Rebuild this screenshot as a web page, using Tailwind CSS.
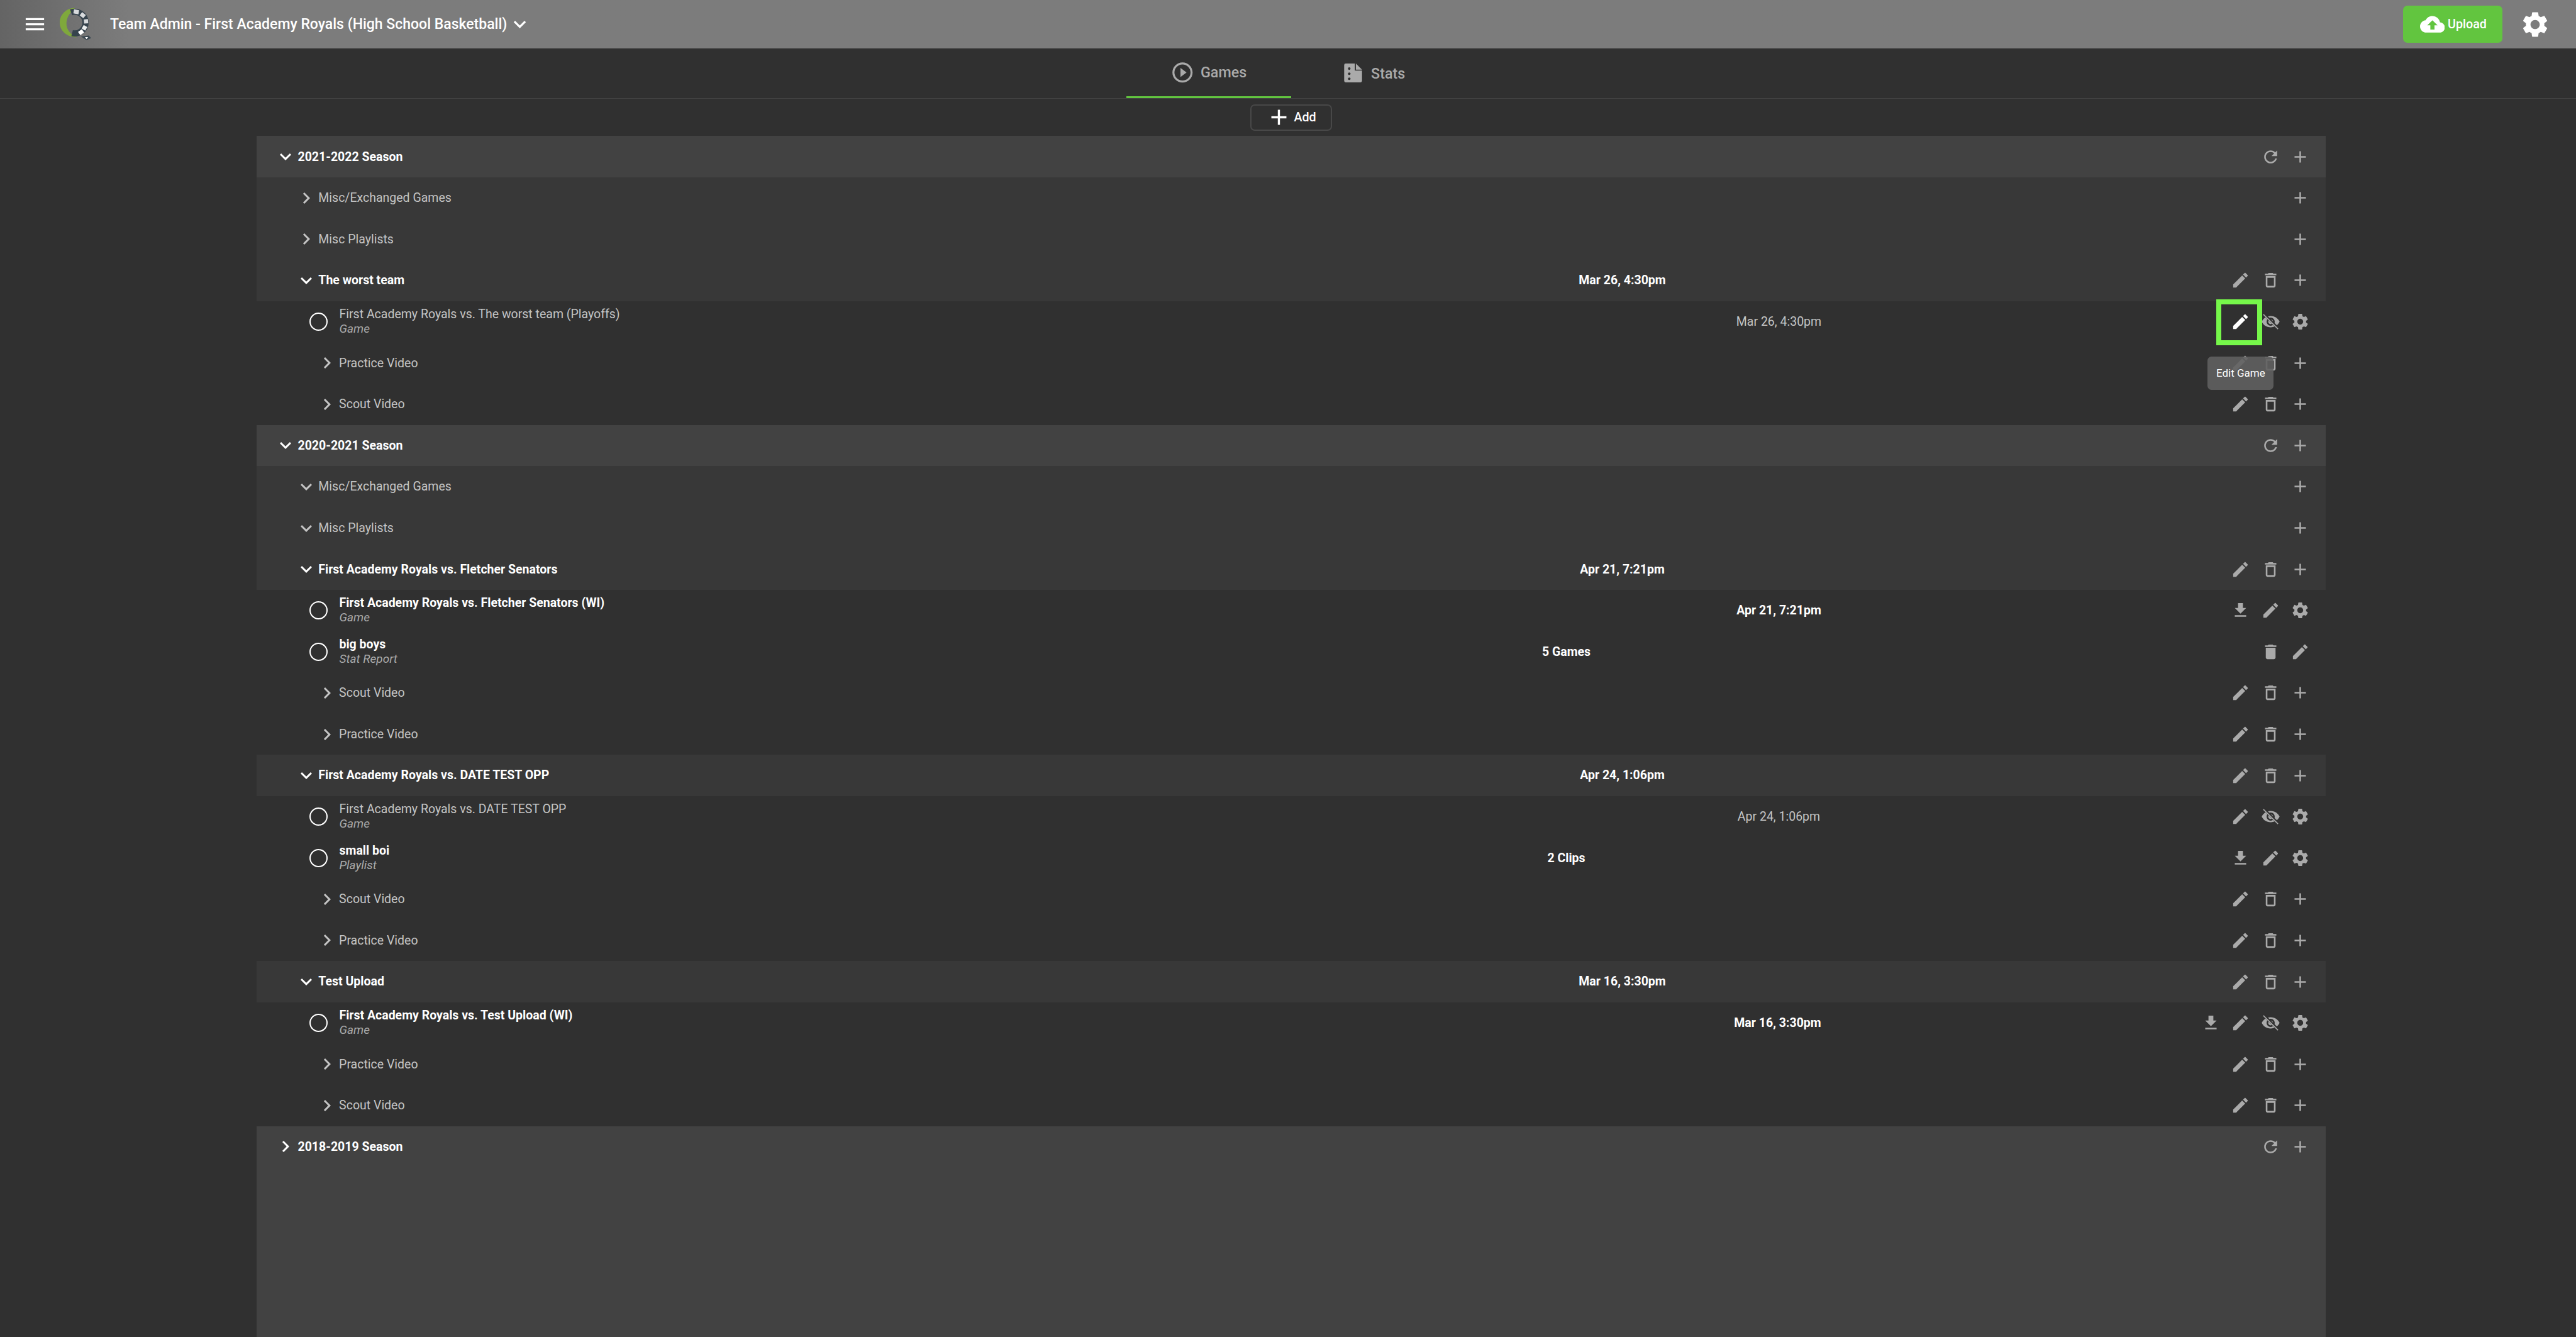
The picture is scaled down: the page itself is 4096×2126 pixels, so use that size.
<!DOCTYPE html>
<html>
<head>
<meta charset="utf-8">
<script src="https://cdn.jsdelivr.net/npm/@tailwindcss/browser@4"></script>
</head>
<body class="bg-[#303030] font-['Roboto',sans-serif] text-[19.5px] overflow-hidden">
<svg class="absolute w-0 h-0">
<symbol id="edit" viewBox="0 0 24 24"><path d="M3 17.25V21h3.75L17.81 9.94l-3.75-3.75L3 17.25zM20.71 7.04c.39-.39.39-1.02 0-1.41l-2.34-2.34c-.39-.39-1.02-.39-1.41 0l-1.83 1.83 3.75 3.75 1.83-1.83z"/></symbol>
<symbol id="trash" viewBox="0 0 24 24"><path d="M6 19c0 1.1.9 2 2 2h8c1.1 0 2-.9 2-2V7H6v12zM8 9h8v10H8V9zm7.5-5l-1-1h-5l-1 1H5v2h14V4z"/></symbol>
<symbol id="trashf" viewBox="0 0 24 24"><path d="M6 19c0 1.1.9 2 2 2h8c1.1 0 2-.9 2-2V7H6v12zM19 4h-3.5l-1-1h-5l-1 1H5v2h14V4z"/></symbol>
<symbol id="add" viewBox="0 0 24 24"><path d="M19 13h-6v6h-2v-6H5v-2h6V5h2v6h6v2z"/></symbol>
<symbol id="gear" viewBox="0 0 24 24"><path d="M19.14 12.94c.04-.3.06-.61.06-.94 0-.32-.02-.64-.07-.94l2.03-1.58c.18-.14.23-.41.12-.61l-1.92-3.32c-.12-.22-.37-.29-.59-.22l-2.39.96c-.5-.38-1.03-.7-1.62-.94l-.36-2.54c-.04-.24-.24-.41-.48-.41h-3.84c-.24 0-.43.17-.47.41l-.36 2.54c-.59.24-1.13.57-1.62.94l-2.39-.96c-.22-.08-.47 0-.59.22L2.74 8.87c-.12.21-.08.47.12.61l2.03 1.58c-.05.3-.09.63-.09.94s.02.64.07.94l-2.03 1.58c-.18.14-.23.41-.12.61l1.92 3.32c.12.22.37.29.59.22l2.39-.96c.5.38 1.03.7 1.62.94l.36 2.54c.05.24.24.41.48.41h3.84c.24 0 .44-.17.47-.41l.36-2.54c.59-.24 1.13-.56 1.62-.94l2.39.96c.22.08.47 0 .59-.22l1.92-3.32c.12-.22.07-.47-.12-.61l-2.01-1.58zM12 15.6c-1.98 0-3.6-1.62-3.6-3.6s1.62-3.6 3.6-3.6 3.6 1.62 3.6 3.6-1.62 3.6-3.6 3.6z"/></symbol>
<symbol id="eye" viewBox="0 0 24 24"><path d="M12 5C7 5 2.73 8 1 12c1.73 4 6 7 11 7s9.27-3 11-7c-1.73-4-6-7-11-7zM12 17c-2.76 0-5-2.24-5-5s2.24-5 5-5 5 2.24 5 5-2.24 5-5 5zm0-8c-1.66 0-3 1.34-3 3s1.34 3 3 3 3-1.34 3-3-1.34-3-3-3z"/><path d="M3.6 2.6L21.4 20.4" stroke="#303030" stroke-width="3.2"/><path d="M3 3L21 21" stroke="#aaaaaa" stroke-width="1.3"/></symbol>
<symbol id="dl" viewBox="0 0 24 24"><path d="M19 9h-4V3H9v6H5l7 7 7-7zM5 18v2h14v-2H5z"/></symbol>
<symbol id="refresh" viewBox="0 0 24 24"><path d="M17.65 6.35C16.2 4.9 14.21 4 12 4c-4.42 0-7.99 3.58-7.99 8s3.57 8 7.99 8c3.73 0 6.84-2.55 7.73-6h-2.08c-.82 2.33-3.04 4-5.65 4-3.31 0-6-2.69-6-6s2.69-6 6-6c1.66 0 3.14.69 4.22 1.78L13 11h7V4l-2.35 2.35z"/></symbol>
<symbol id="down" viewBox="0 0 24 24"><path d="M7.41 8.59L12 13.17l4.59-4.58L18 10l-6 6-6-6 1.41-1.41z"/></symbol>
<symbol id="right" viewBox="0 0 24 24"><path d="M8.59 16.59L13.17 12 8.59 7.41 10 6l6 6-6 6-1.41-1.41z"/></symbol>
</svg>

<div class="flex flex-col h-[2126px] w-[4096px]">
  <header class="h-[77px] shrink-0 flex items-center bg-gradient-to-r from-[#646464] via-[#7c7c7c] via-[5%] to-[#7c7c7c] text-white pl-[36px] pr-[45px]">
    <svg class="w-[39px] h-[39px] fill-current" viewBox="0 0 24 24"><path d="M3 18h18v-2H3v2zm0-5h18v-2H3v2zm0-7v2h18V6H3z"/></svg>
    <svg class="w-[50px] h-[52px] ml-[20px] mt-[-1px]" viewBox="0 0 61 63">
      <path d="M30 .5C12 1 0 14 0 29c0 16 14 28 33 28.5C20 52 13 42 13 31 13 20 19 10 30 .5z" fill="#7fa83c"/>
      <path d="M22 9.2A21 21 0 1 1 24 49.4" fill="none" stroke="#36434d" stroke-width="12"/>
      <g fill="#d8dadc">
        <rect x="27" y="4" width="10" height="8" transform="rotate(10 32 8)"/>
        <rect x="40" y="11" width="9" height="8" transform="rotate(38 45 15)"/>
        <rect x="46.500" y="23" width="8" height="8" transform="rotate(85 51 27)"/>
        <rect x="44" y="35" width="8" height="8" transform="rotate(120 48 39)" fill="#eceeee"/>
        <rect x="36" y="44" width="9" height="8" transform="rotate(145 41 48)" fill="#ffffff"/>
      </g>
      <polygon points="41,56 56,54 61,59 52,63" fill="#3c4952"/>
      <polygon points="49,57 55,57 52,61" fill="#ffffff"/>
    </svg>
    <span class="ml-[30px] text-[23px] font-medium leading-none">Team Admin - First Academy Royals (High School Basketball)</span>
    <svg class="w-[39px] h-[39px] fill-current ml-[1px]" viewBox="0 0 24 24"><use href="#down"/></svg>
    <div class="ml-auto flex items-center gap-[32px]">
      <div class="w-[158.3px] h-[59px] bg-[#62c53f] rounded-[7px] flex items-center pl-[27px] gap-[5px] text-[19.7px] font-medium">
        <svg class="w-[39.4px] h-[39.4px] fill-current" viewBox="0 0 24 24"><path d="M19.35 10.04C18.67 6.59 15.64 4 12 4 9.11 4 6.6 5.64 5.35 8.04 2.34 8.36 0 10.91 0 14c0 3.31 2.69 6 6 6h13c2.76 0 5-2.24 5-5 0-2.64-2.05-4.78-4.65-4.96zM14 13v4h-4v-4H7l5-5 5 5h-3z"/></svg>
        <span>Upload</span>
      </div>
      <svg class="w-[40px] h-[40px] fill-current" viewBox="2.2 2.2 19.6 19.6"><use href="#gear" x="0" y="0" width="24" height="24"/></svg>
    </div>
  </header>

  <nav class="h-[80.4px] shrink-0 border-b-[1.6px] border-[#444444] flex justify-center pl-[10px] text-[#aaaaaa] text-[23.3px] font-medium">
    <div class="w-[262.4px] h-[78.8px] border-b-[3.3px] border-[#62c53f] flex items-center justify-center gap-[9px]">
      <svg class="w-[38.5px] h-[38.5px] fill-current" viewBox="0 0 24 24"><path d="M10 16.5l6-4.500-6-4.500v9zM12 2C6.480 2 2 6.480 2 12s4.480 10 10 10 10-4.480 10-10S17.520 2 12 2zm0 18c-4.410 0-8-3.590-8-8s3.590-8 8-8 8 3.590 8 8-3.590 8-8 8z"/></svg>
      <span class="pt-[2px]">Games</span>
    </div>
    <div class="w-[262.4px] h-[78.8px] flex items-center justify-center gap-[14px] pl-[3px]">
      <svg class="w-[29px] h-[30px]" viewBox="0 0 35 37"><path fill="#aaaaaa" d="M3 0H21V14H35V34a3 3 0 0 1-3 3H3a3 3 0 0 1-3-3V3a3 3 0 0 1 3-3zM23 0L35 12H23z"/><g fill="#303030"><circle cx="10" cy="10" r="2.500"/><circle cx="10" cy="20" r="2.500"/><circle cx="10" cy="30" r="2.500"/></g></svg>
      <span class="pt-[2px]">Stats</span>
    </div>
  </nav>

  <div class="h-[59px] shrink-0 flex justify-center pl-[10px] pt-[8.2px]">
    <div class="w-[130px] h-[42px] border-[2px] border-[#484848] rounded-[7px] flex items-center justify-center gap-[3px] text-white text-[19.7px] font-medium">
      <svg class="w-[41px] h-[41px] fill-current" viewBox="0 0 24 24"><use href="#add"/></svg>
      <span>Add</span>
    </div>
  </div>

  <main class="relative flex-1 ml-[407.5px] mr-[398px] bg-[#424242]">

    <div class="h-[65.6px] flex items-center bg-[#424242]">
      <div class="w-[1972px] flex items-center pl-[28.7px] text-white font-bold"><svg class="w-[36px] h-[36px] fill-current mr-[1.3px]"><use href="#down"/></svg>2021-2022 Season</div>
      <div class="ml-auto flex items-center pr-[16.4px] text-[#aaaaaa]">
        <span class="w-[47.56px] flex justify-center"><svg class="w-[31px] h-[31px] fill-current"><use href="#refresh"/></svg></span>
        <span class="w-[47.56px] flex justify-center"><svg class="w-[31px] h-[31px] fill-current"><use href="#add"/></svg></span>
      </div>
    </div>

    <div class="h-[65.6px] flex items-center bg-[#383838]">
      <div class="w-[1972px] flex items-center pl-[61.5px] text-[#c4c4c4]"><svg class="w-[36px] h-[36px] fill-current mr-[1.3px]"><use href="#right"/></svg>Misc/Exchanged Games</div>
      <div class="ml-auto flex items-center pr-[16.4px] text-[#aaaaaa]">
        <span class="w-[47.56px] flex justify-center"><svg class="w-[31px] h-[31px] fill-current"><use href="#add"/></svg></span>
      </div>
    </div>

    <div class="h-[65.6px] flex items-center bg-[#383838]">
      <div class="w-[1972px] flex items-center pl-[61.5px] text-[#c4c4c4]"><svg class="w-[36px] h-[36px] fill-current mr-[1.3px]"><use href="#right"/></svg>Misc Playlists</div>
      <div class="ml-auto flex items-center pr-[16.4px] text-[#aaaaaa]">
        <span class="w-[47.56px] flex justify-center"><svg class="w-[31px] h-[31px] fill-current"><use href="#add"/></svg></span>
      </div>
    </div>

    <div class="h-[65.6px] flex items-center bg-[#383838]">
      <div class="w-[1972px] flex items-center pl-[61.5px] text-white font-bold"><svg class="w-[36px] h-[36px] fill-current mr-[1.3px]"><use href="#down"/></svg>The worst team</div>
      <div class="w-[400px] text-center text-white font-bold">Mar 26, 4:30pm</div>
      <div class="ml-auto flex items-center pr-[16.4px] text-[#aaaaaa]">
        <span class="w-[47.56px] flex justify-center"><svg class="w-[31px] h-[31px] fill-current"><use href="#edit"/></svg></span>
        <span class="w-[47.56px] flex justify-center"><svg class="w-[31px] h-[31px] fill-current"><use href="#trash"/></svg></span>
        <span class="w-[47.56px] flex justify-center"><svg class="w-[31px] h-[31px] fill-current"><use href="#add"/></svg></span>
      </div>
    </div>

    <div class="h-[65.6px] flex items-center bg-[#303030]">
      <div class="w-[2221px] flex items-center pl-[84.6px]">
        <span class="w-[28.7px] h-[28.7px] rounded-full border-[2.5px] border-white shrink-0"></span>
        <div class="ml-[18.7px] flex flex-col"><span class="leading-[22.5px] text-[#c4c4c4]">First Academy Royals vs. The worst team (Playoffs)</span><span class="italic text-[19px] leading-[22px] text-[#aaaaaa]">Game</span></div>
      </div>
      <div class="w-[400px] text-center text-[#c4c4c4]">Mar 26, 4:30pm</div>
      <div class="ml-auto flex items-center pr-[16.4px] text-[#aaaaaa]">
        <span class="w-[47.56px] flex justify-center text-white"><svg class="w-[31px] h-[31px] fill-current"><use href="#edit"/></svg></span>
        <span class="w-[47.56px] flex justify-center"><svg class="w-[31px] h-[31px] fill-current"><use href="#eye"/></svg></span>
        <span class="w-[47.56px] flex justify-center"><svg class="w-[31px] h-[31px] fill-current"><use href="#gear"/></svg></span>
      </div>
    </div>

    <div class="h-[65.6px] flex items-center bg-[#303030]">
      <div class="w-[1972px] flex items-center pl-[94.3px] text-[#c4c4c4]"><svg class="w-[36px] h-[36px] fill-current mr-[1.3px]"><use href="#right"/></svg>Practice Video</div>
      <div class="ml-auto flex items-center pr-[16.4px] text-[#aaaaaa]">
        <span class="w-[47.56px] flex justify-center"><svg class="w-[31px] h-[31px] fill-current"><use href="#edit"/></svg></span>
        <span class="w-[47.56px] flex justify-center"><svg class="w-[31px] h-[31px] fill-current"><use href="#trash"/></svg></span>
        <span class="w-[47.56px] flex justify-center"><svg class="w-[31px] h-[31px] fill-current"><use href="#add"/></svg></span>
      </div>
    </div>

    <div class="h-[65.6px] flex items-center bg-[#303030]">
      <div class="w-[1972px] flex items-center pl-[94.3px] text-[#c4c4c4]"><svg class="w-[36px] h-[36px] fill-current mr-[1.3px]"><use href="#right"/></svg>Scout Video</div>
      <div class="ml-auto flex items-center pr-[16.4px] text-[#aaaaaa]">
        <span class="w-[47.56px] flex justify-center"><svg class="w-[31px] h-[31px] fill-current"><use href="#edit"/></svg></span>
        <span class="w-[47.56px] flex justify-center"><svg class="w-[31px] h-[31px] fill-current"><use href="#trash"/></svg></span>
        <span class="w-[47.56px] flex justify-center"><svg class="w-[31px] h-[31px] fill-current"><use href="#add"/></svg></span>
      </div>
    </div>

    <div class="h-[65.6px] flex items-center bg-[#424242]">
      <div class="w-[1972px] flex items-center pl-[28.7px] text-white font-bold"><svg class="w-[36px] h-[36px] fill-current mr-[1.3px]"><use href="#down"/></svg>2020-2021 Season</div>
      <div class="ml-auto flex items-center pr-[16.4px] text-[#aaaaaa]">
        <span class="w-[47.56px] flex justify-center"><svg class="w-[31px] h-[31px] fill-current"><use href="#refresh"/></svg></span>
        <span class="w-[47.56px] flex justify-center"><svg class="w-[31px] h-[31px] fill-current"><use href="#add"/></svg></span>
      </div>
    </div>

    <div class="h-[65.6px] flex items-center bg-[#383838]">
      <div class="w-[1972px] flex items-center pl-[61.5px] text-[#c4c4c4]"><svg class="w-[36px] h-[36px] fill-current mr-[1.3px]"><use href="#down"/></svg>Misc/Exchanged Games</div>
      <div class="ml-auto flex items-center pr-[16.4px] text-[#aaaaaa]">
        <span class="w-[47.56px] flex justify-center"><svg class="w-[31px] h-[31px] fill-current"><use href="#add"/></svg></span>
      </div>
    </div>

    <div class="h-[65.6px] flex items-center bg-[#383838]">
      <div class="w-[1972px] flex items-center pl-[61.5px] text-[#c4c4c4]"><svg class="w-[36px] h-[36px] fill-current mr-[1.3px]"><use href="#down"/></svg>Misc Playlists</div>
      <div class="ml-auto flex items-center pr-[16.4px] text-[#aaaaaa]">
        <span class="w-[47.56px] flex justify-center"><svg class="w-[31px] h-[31px] fill-current"><use href="#add"/></svg></span>
      </div>
    </div>

    <div class="h-[65.6px] flex items-center bg-[#383838]">
      <div class="w-[1972px] flex items-center pl-[61.5px] text-white font-bold"><svg class="w-[36px] h-[36px] fill-current mr-[1.3px]"><use href="#down"/></svg>First Academy Royals vs. Fletcher Senators</div>
      <div class="w-[400px] text-center text-white font-bold">Apr 21, 7:21pm</div>
      <div class="ml-auto flex items-center pr-[16.4px] text-[#aaaaaa]">
        <span class="w-[47.56px] flex justify-center"><svg class="w-[31px] h-[31px] fill-current"><use href="#edit"/></svg></span>
        <span class="w-[47.56px] flex justify-center"><svg class="w-[31px] h-[31px] fill-current"><use href="#trash"/></svg></span>
        <span class="w-[47.56px] flex justify-center"><svg class="w-[31px] h-[31px] fill-current"><use href="#add"/></svg></span>
      </div>
    </div>

    <div class="h-[65.6px] flex items-center bg-[#303030]">
      <div class="w-[2221px] flex items-center pl-[84.6px]">
        <span class="w-[28.7px] h-[28.7px] rounded-full border-[2.5px] border-white shrink-0"></span>
        <div class="ml-[18.7px] flex flex-col"><span class="leading-[22.5px] text-white font-bold">First Academy Royals vs. Fletcher Senators (WI)</span><span class="italic text-[19px] leading-[22px] text-[#aaaaaa]">Game</span></div>
      </div>
      <div class="w-[400px] text-center text-white font-bold">Apr 21, 7:21pm</div>
      <div class="ml-auto flex items-center pr-[16.4px] text-[#aaaaaa]">
        <span class="w-[47.56px] flex justify-center"><svg class="w-[31px] h-[31px] fill-current"><use href="#dl"/></svg></span>
        <span class="w-[47.56px] flex justify-center"><svg class="w-[31px] h-[31px] fill-current"><use href="#edit"/></svg></span>
        <span class="w-[47.56px] flex justify-center"><svg class="w-[31px] h-[31px] fill-current"><use href="#gear"/></svg></span>
      </div>
    </div>

    <div class="h-[65.6px] flex items-center bg-[#303030]">
      <div class="w-[1883px] flex items-center pl-[84.6px]">
        <span class="w-[28.7px] h-[28.7px] rounded-full border-[2.5px] border-white shrink-0"></span>
        <div class="ml-[18.7px] flex flex-col"><span class="leading-[22.5px] text-white font-bold">big boys</span><span class="italic text-[19px] leading-[22px] text-[#aaaaaa]">Stat Report</span></div>
      </div>
      <div class="w-[400px] text-center text-white font-bold">5 Games</div>
      <div class="ml-auto flex items-center pr-[16.4px] text-[#aaaaaa]">
        <span class="w-[47.56px] flex justify-center"><svg class="w-[31px] h-[31px] fill-current"><use href="#trashf"/></svg></span>
        <span class="w-[47.56px] flex justify-center"><svg class="w-[31px] h-[31px] fill-current"><use href="#edit"/></svg></span>
      </div>
    </div>

    <div class="h-[65.6px] flex items-center bg-[#303030]">
      <div class="w-[1972px] flex items-center pl-[94.3px] text-[#c4c4c4]"><svg class="w-[36px] h-[36px] fill-current mr-[1.3px]"><use href="#right"/></svg>Scout Video</div>
      <div class="ml-auto flex items-center pr-[16.4px] text-[#aaaaaa]">
        <span class="w-[47.56px] flex justify-center"><svg class="w-[31px] h-[31px] fill-current"><use href="#edit"/></svg></span>
        <span class="w-[47.56px] flex justify-center"><svg class="w-[31px] h-[31px] fill-current"><use href="#trash"/></svg></span>
        <span class="w-[47.56px] flex justify-center"><svg class="w-[31px] h-[31px] fill-current"><use href="#add"/></svg></span>
      </div>
    </div>

    <div class="h-[65.6px] flex items-center bg-[#303030]">
      <div class="w-[1972px] flex items-center pl-[94.3px] text-[#c4c4c4]"><svg class="w-[36px] h-[36px] fill-current mr-[1.3px]"><use href="#right"/></svg>Practice Video</div>
      <div class="ml-auto flex items-center pr-[16.4px] text-[#aaaaaa]">
        <span class="w-[47.56px] flex justify-center"><svg class="w-[31px] h-[31px] fill-current"><use href="#edit"/></svg></span>
        <span class="w-[47.56px] flex justify-center"><svg class="w-[31px] h-[31px] fill-current"><use href="#trash"/></svg></span>
        <span class="w-[47.56px] flex justify-center"><svg class="w-[31px] h-[31px] fill-current"><use href="#add"/></svg></span>
      </div>
    </div>

    <div class="h-[65.6px] flex items-center bg-[#383838]">
      <div class="w-[1972px] flex items-center pl-[61.5px] text-white font-bold"><svg class="w-[36px] h-[36px] fill-current mr-[1.3px]"><use href="#down"/></svg>First Academy Royals vs. DATE TEST OPP</div>
      <div class="w-[400px] text-center text-white font-bold">Apr 24, 1:06pm</div>
      <div class="ml-auto flex items-center pr-[16.4px] text-[#aaaaaa]">
        <span class="w-[47.56px] flex justify-center"><svg class="w-[31px] h-[31px] fill-current"><use href="#edit"/></svg></span>
        <span class="w-[47.56px] flex justify-center"><svg class="w-[31px] h-[31px] fill-current"><use href="#trash"/></svg></span>
        <span class="w-[47.56px] flex justify-center"><svg class="w-[31px] h-[31px] fill-current"><use href="#add"/></svg></span>
      </div>
    </div>

    <div class="h-[65.6px] flex items-center bg-[#303030]">
      <div class="w-[2221px] flex items-center pl-[84.6px]">
        <span class="w-[28.7px] h-[28.7px] rounded-full border-[2.5px] border-white shrink-0"></span>
        <div class="ml-[18.7px] flex flex-col"><span class="leading-[22.5px] text-[#c4c4c4]">First Academy Royals vs. DATE TEST OPP</span><span class="italic text-[19px] leading-[22px] text-[#aaaaaa]">Game</span></div>
      </div>
      <div class="w-[400px] text-center text-[#c4c4c4]">Apr 24, 1:06pm</div>
      <div class="ml-auto flex items-center pr-[16.4px] text-[#aaaaaa]">
        <span class="w-[47.56px] flex justify-center"><svg class="w-[31px] h-[31px] fill-current"><use href="#edit"/></svg></span>
        <span class="w-[47.56px] flex justify-center"><svg class="w-[31px] h-[31px] fill-current"><use href="#eye"/></svg></span>
        <span class="w-[47.56px] flex justify-center"><svg class="w-[31px] h-[31px] fill-current"><use href="#gear"/></svg></span>
      </div>
    </div>

    <div class="h-[65.6px] flex items-center bg-[#303030]">
      <div class="w-[1883px] flex items-center pl-[84.6px]">
        <span class="w-[28.7px] h-[28.7px] rounded-full border-[2.5px] border-white shrink-0"></span>
        <div class="ml-[18.7px] flex flex-col"><span class="leading-[22.5px] text-white font-bold">small boi</span><span class="italic text-[19px] leading-[22px] text-[#aaaaaa]">Playlist</span></div>
      </div>
      <div class="w-[400px] text-center text-white font-bold">2 Clips</div>
      <div class="ml-auto flex items-center pr-[16.4px] text-[#aaaaaa]">
        <span class="w-[47.56px] flex justify-center"><svg class="w-[31px] h-[31px] fill-current"><use href="#dl"/></svg></span>
        <span class="w-[47.56px] flex justify-center"><svg class="w-[31px] h-[31px] fill-current"><use href="#edit"/></svg></span>
        <span class="w-[47.56px] flex justify-center"><svg class="w-[31px] h-[31px] fill-current"><use href="#gear"/></svg></span>
      </div>
    </div>

    <div class="h-[65.6px] flex items-center bg-[#303030]">
      <div class="w-[1972px] flex items-center pl-[94.3px] text-[#c4c4c4]"><svg class="w-[36px] h-[36px] fill-current mr-[1.3px]"><use href="#right"/></svg>Scout Video</div>
      <div class="ml-auto flex items-center pr-[16.4px] text-[#aaaaaa]">
        <span class="w-[47.56px] flex justify-center"><svg class="w-[31px] h-[31px] fill-current"><use href="#edit"/></svg></span>
        <span class="w-[47.56px] flex justify-center"><svg class="w-[31px] h-[31px] fill-current"><use href="#trash"/></svg></span>
        <span class="w-[47.56px] flex justify-center"><svg class="w-[31px] h-[31px] fill-current"><use href="#add"/></svg></span>
      </div>
    </div>

    <div class="h-[65.6px] flex items-center bg-[#303030]">
      <div class="w-[1972px] flex items-center pl-[94.3px] text-[#c4c4c4]"><svg class="w-[36px] h-[36px] fill-current mr-[1.3px]"><use href="#right"/></svg>Practice Video</div>
      <div class="ml-auto flex items-center pr-[16.4px] text-[#aaaaaa]">
        <span class="w-[47.56px] flex justify-center"><svg class="w-[31px] h-[31px] fill-current"><use href="#edit"/></svg></span>
        <span class="w-[47.56px] flex justify-center"><svg class="w-[31px] h-[31px] fill-current"><use href="#trash"/></svg></span>
        <span class="w-[47.56px] flex justify-center"><svg class="w-[31px] h-[31px] fill-current"><use href="#add"/></svg></span>
      </div>
    </div>

    <div class="h-[65.6px] flex items-center bg-[#383838]">
      <div class="w-[1972px] flex items-center pl-[61.5px] text-white font-bold"><svg class="w-[36px] h-[36px] fill-current mr-[1.3px]"><use href="#down"/></svg>Test Upload</div>
      <div class="w-[400px] text-center text-white font-bold">Mar 16, 3:30pm</div>
      <div class="ml-auto flex items-center pr-[16.4px] text-[#aaaaaa]">
        <span class="w-[47.56px] flex justify-center"><svg class="w-[31px] h-[31px] fill-current"><use href="#edit"/></svg></span>
        <span class="w-[47.56px] flex justify-center"><svg class="w-[31px] h-[31px] fill-current"><use href="#trash"/></svg></span>
        <span class="w-[47.56px] flex justify-center"><svg class="w-[31px] h-[31px] fill-current"><use href="#add"/></svg></span>
      </div>
    </div>

    <div class="h-[65.6px] flex items-center bg-[#303030]">
      <div class="w-[2219px] flex items-center pl-[84.6px]">
        <span class="w-[28.7px] h-[28.7px] rounded-full border-[2.5px] border-white shrink-0"></span>
        <div class="ml-[18.7px] flex flex-col"><span class="leading-[22.5px] text-white font-bold">First Academy Royals vs. Test Upload (WI)</span><span class="italic text-[19px] leading-[22px] text-[#aaaaaa]">Game</span></div>
      </div>
      <div class="w-[400px] text-center text-white font-bold">Mar 16, 3:30pm</div>
      <div class="ml-auto flex items-center pr-[16.4px] text-[#aaaaaa]">
        <span class="w-[47.56px] flex justify-center"><svg class="w-[31px] h-[31px] fill-current"><use href="#dl"/></svg></span>
        <span class="w-[47.56px] flex justify-center"><svg class="w-[31px] h-[31px] fill-current"><use href="#edit"/></svg></span>
        <span class="w-[47.56px] flex justify-center"><svg class="w-[31px] h-[31px] fill-current"><use href="#eye"/></svg></span>
        <span class="w-[47.56px] flex justify-center"><svg class="w-[31px] h-[31px] fill-current"><use href="#gear"/></svg></span>
      </div>
    </div>

    <div class="h-[65.6px] flex items-center bg-[#303030]">
      <div class="w-[1972px] flex items-center pl-[94.3px] text-[#c4c4c4]"><svg class="w-[36px] h-[36px] fill-current mr-[1.3px]"><use href="#right"/></svg>Practice Video</div>
      <div class="ml-auto flex items-center pr-[16.4px] text-[#aaaaaa]">
        <span class="w-[47.56px] flex justify-center"><svg class="w-[31px] h-[31px] fill-current"><use href="#edit"/></svg></span>
        <span class="w-[47.56px] flex justify-center"><svg class="w-[31px] h-[31px] fill-current"><use href="#trash"/></svg></span>
        <span class="w-[47.56px] flex justify-center"><svg class="w-[31px] h-[31px] fill-current"><use href="#add"/></svg></span>
      </div>
    </div>

    <div class="h-[65.6px] flex items-center bg-[#303030]">
      <div class="w-[1972px] flex items-center pl-[94.3px] text-[#c4c4c4]"><svg class="w-[36px] h-[36px] fill-current mr-[1.3px]"><use href="#right"/></svg>Scout Video</div>
      <div class="ml-auto flex items-center pr-[16.4px] text-[#aaaaaa]">
        <span class="w-[47.56px] flex justify-center"><svg class="w-[31px] h-[31px] fill-current"><use href="#edit"/></svg></span>
        <span class="w-[47.56px] flex justify-center"><svg class="w-[31px] h-[31px] fill-current"><use href="#trash"/></svg></span>
        <span class="w-[47.56px] flex justify-center"><svg class="w-[31px] h-[31px] fill-current"><use href="#add"/></svg></span>
      </div>
    </div>

    <div class="h-[65.6px] flex items-center bg-[#424242]">
      <div class="w-[1972px] flex items-center pl-[28.7px] text-white font-bold"><svg class="w-[36px] h-[36px] fill-current mr-[1.3px]"><use href="#right"/></svg>2018-2019 Season</div>
      <div class="ml-auto flex items-center pr-[16.4px] text-[#aaaaaa]">
        <span class="w-[47.56px] flex justify-center"><svg class="w-[31px] h-[31px] fill-current"><use href="#refresh"/></svg></span>
        <span class="w-[47.56px] flex justify-center"><svg class="w-[31px] h-[31px] fill-current"><use href="#add"/></svg></span>
      </div>
    </div>

    <div class="absolute left-[3116px] top-[259.9px] w-[73.8px] h-[73px] border-[8.2px] border-[#76f74a]"></div>
    <div class="absolute left-[3102.9px] top-[350.9px] w-[105px] h-[52.5px] rounded-[6.5px] bg-[#616161]/90 text-white text-[17px] flex items-center justify-center">Edit Game</div>
  </main>
</div>
</body>
</html>
